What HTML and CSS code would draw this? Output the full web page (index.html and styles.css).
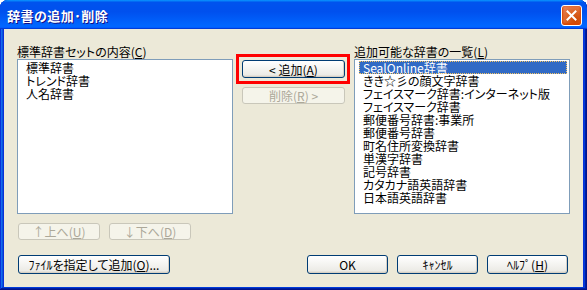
FILE: index.html
```html
<!DOCTYPE html>
<html lang="ja">
<head>
    <meta charset="UTF-8">
    <title>辞書の追加･削除</title>
    <link rel="stylesheet" href="styles.css">
</head>
<body>
    <div class="window">
        <div class="titlebar">
            <span class="title">辞書の追加･削除</span>
            <span class="close">
                <svg width="11" height="11" viewBox="0 0 11 11">
                    <path d="M1.5 1.5 L9.5 9.5 M9.5 1.5 L1.5 9.5" stroke="#fff" stroke-width="2" stroke-linecap="square"/>
                </svg>
            </span>
        </div>
        <div class="client">
            <div class="main">
                <div class="col">
                    <div class="label">標準辞書セットの内容(<u>C</u>)</div>
                    <ul class="list">
                        <li>標準辞書</li>
                        <li>トレンド辞書</li>
                        <li>人名辞書</li>
                    </ul>
                    <div class="move-buttons">
                        <button class="btn btn-move" disabled>↑上へ(<u>U</u>)</button>
                        <button class="btn btn-move" disabled>↓下へ(<u>D</u>)</button>
                    </div>
                </div>
                <div class="mid">
                    <div class="marked">
                        <button class="btn btn-mid">&lt; 追加(<u>A</u>)</button>
                    </div>
                    <button class="btn btn-mid btn-delete" disabled>削除(<u>R</u>) &gt;</button>
                </div>
                <div class="col">
                    <div class="label">追加可能な辞書の一覧(<u>L</u>)</div>
                    <ul class="list">
                        <li class="selected">SealOnline辞書</li>
                        <li>きき☆彡の顔文字辞書</li>
                        <li>フェイスマーク辞書:インターネット版</li>
                        <li>フェイスマーク辞書</li>
                        <li>郵便番号辞書:事業所</li>
                        <li>郵便番号辞書</li>
                        <li>町名住所変換辞書</li>
                        <li>単漢字辞書</li>
                        <li>記号辞書</li>
                        <li>カタカナ語英語辞書</li>
                        <li>日本語英語辞書</li>
                    </ul>
                </div>
            </div>
            <div class="footer">
                <button class="btn btn-file">ﾌｧｲﾙを指定して追加(<u>O</u>)...</button>
                <div class="actions">
                    <button class="btn btn-action">OK</button>
                    <button class="btn btn-action">ｷｬﾝｾﾙ</button>
                    <button class="btn btn-action">ﾍﾙﾌﾟ(<u>H</u>)</button>
                </div>
            </div>
        </div>
    </div>
</body>
</html>
```

FILE: styles.css
```css
body {
    margin: 0;
    padding: 0;
    background: #ffffff;
    font-family: "Noto Sans CJK JP", "Liberation Sans", sans-serif;
    font-size: 12px;
    font-feature-settings: "palt";
}

.window {
    width: 587px;
    height: 290px;
    box-sizing: border-box;
    display: flex;
    flex-direction: column;
    background: #0831d9;
    border-radius: 8px 8px 0 0;
    padding: 0 4px 3px 4px;
    box-shadow: inset -1px -1px #00138c, inset 1px 1px #0831d9, inset -2px -2px #001ea0, inset 2px 2px #166aee, inset -3px -3px #003bda, inset 3px 3px #0855dd;
}

.titlebar {
    height: 29px;
    margin: 0 -4px;
    display: flex;
    align-items: center;
    justify-content: space-between;
    padding: 1px 5px 0 7px;
    box-sizing: border-box;
    border-radius: 8px 8px 0 0;
    background: linear-gradient(180deg, #0997ff, #0053ee 8%, #0050ee 40%, #0066ff 88%, #0066ff 93%, #005bff 95%, #003dd7 96%, #003dd7);
}

.title {
    color: #ffffff;
    font-size: 13px;
    font-weight: bold;
    letter-spacing: 0.5px;
    text-shadow: 1px 1px #0f1089;
}

.close {
    width: 19px;
    height: 19px;
    border: 1px solid #ffffff;
    border-radius: 3px;
    display: flex;
    align-items: center;
    justify-content: center;
    background: radial-gradient(circle at 70% 75%, #cc4600 0%, #dc6527 45%, #e8855e 90%);
    box-shadow: inset 0 -1px 2px 1px #da4600;
}

.client {
    flex: 1;
    background: #ece9d8;
    padding: 15px 13px 0 13px;
}

.main {
    display: flex;
    gap: 9px;
}

.col {
    width: 216px;
    display: flex;
    flex-direction: column;
}

.label {
    height: 15px;
    line-height: 15px;
    color: #000000;
    white-space: nowrap;
}

.list {
    margin: 0;
    list-style: none;
    height: 155px;
    box-sizing: border-box;
    padding: 1px 2px 1px 1px;
    background: #ffffff;
    border: 1px solid #7f9db9;
}

.list li {
    height: 13px;
    line-height: 13px;
    padding-left: 7px;
    white-space: nowrap;
    color: #000000;
}

.list li.selected {
    margin-left: 3px;
    padding-left: 4px;
    background: #316ac5;
    color: #ffffff;
    outline: 1px dotted #f5c462;
    outline-offset: -1px;
}

.btn {
    font-family: inherit;
    font-size: 12px;
    font-feature-settings: "palt";
    color: #000000;
    padding: 0;
    line-height: 15px;
    border: 1px solid #003c74;
    border-radius: 3px;
    background: linear-gradient(180deg, #ffffff, #ecebe6 86%, #d6d0c5);
    box-shadow: inset -1px -1px #d6d0c5;
}

.btn:disabled {
    color: #aca899;
    border-color: #c9c7ba;
    background: #f5f4ea;
    box-shadow: none;
}

.move-buttons {
    display: flex;
    gap: 9px;
    margin-top: 9px;
    padding-left: 1px;
}

.btn-move {
    width: 82px;
    height: 17px;
}

.mid {
    width: 103px;
    display: flex;
    flex-direction: column;
    padding-top: 16px;
}

.marked {
    position: relative;
}

.marked::after {
    content: "";
    position: absolute;
    top: -6px;
    bottom: -6px;
    left: -6px;
    right: -5px;
    border: 3px solid #ff0000;
}

.btn-mid {
    width: 103px;
    height: 18px;
}

.btn-delete {
    height: 17px;
    margin-top: 9px;
}

.footer {
    display: flex;
    justify-content: space-between;
    margin-top: 15px;
    padding: 0 2px 0 1px;
}

.actions {
    display: flex;
    gap: 9px;
}

.btn-file {
    width: 152px;
    height: 19px;
}

.btn-action {
    width: 81px;
    height: 19px;
}
```
